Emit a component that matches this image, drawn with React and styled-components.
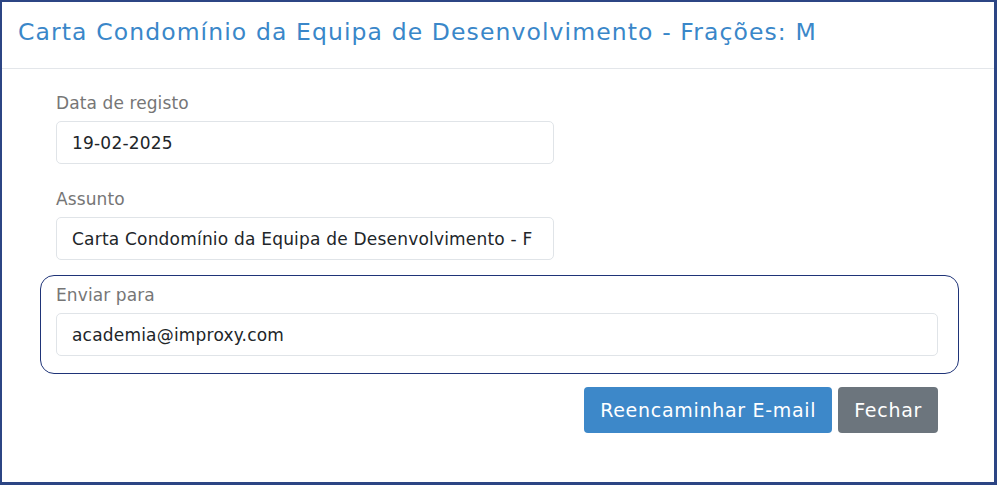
import React from 'react';
import styled, { createGlobalStyle } from 'styled-components';

const GlobalStyle = createGlobalStyle`
  html, body {
    margin: 0;
    padding: 0;
    background: #fff;
  }
  * {
    box-sizing: border-box;
  }
`;

const Frame = styled.div`
  width: 997px;
  height: 485px;
  border: 2px solid #2c4584;
  border-right-width: 3px;
  border-bottom-width: 3px;
  background: #fff;
  font-family: "DejaVu Sans", "Open Sans", sans-serif;
  overflow: hidden;
`;

const Header = styled.header`
  height: 67px;
  padding: 0 16px 6px;
  display: flex;
  align-items: center;
  border-bottom: 1px solid #e3e6ea;
`;

const Title = styled.h3`
  margin: 0;
  font-size: 23.5px;
  font-weight: 400;
  color: #3a87c9;
  letter-spacing: 1.1px;
  white-space: nowrap;
`;

const Body = styled.section`
  padding: 20px 56px 0 54px;
  display: flex;
  flex-direction: column;
`;

const Group = styled.div`
  position: relative;
  margin-bottom: 21px;
  ${({ highlighted }) => highlighted && `
    &::after {
      content: '';
      position: absolute;
      top: -6px;
      left: -16px;
      right: -21px;
      bottom: -18px;
      border: 1.5px solid #1f3478;
      border-radius: 14px;
      pointer-events: none;
    }
  `};
`;

const Label = styled.label`
  display: block;
  font-size: 17px;
  line-height: 28px;
  letter-spacing: 0.1px;
  color: #767676;
  margin-bottom: 4px;
`;

const Field = styled.input`
  display: block;
  width: 100%;
  height: 43px;
  max-width: ${({ narrow }) => (narrow ? '498px' : 'none')};
  border: 1px solid #e0e4e8;
  border-radius: 5px;
  padding: 0 21px 0 15px;
  font-family: inherit;
  font-size: 17px;
  letter-spacing: 0.2px;
  color: #212529;
  background: #fff;
  outline: none;
`;

const Footer = styled.div`
  display: flex;
  justify-content: flex-end;
  gap: 6px;
  margin-top: 10px;
`;

const Button = styled.button`
  height: 46px;
  padding: 0 16px;
  border: 0;
  border-radius: 4px;
  font-family: inherit;
  font-size: 19px;
  letter-spacing: 0.7px;
  color: #fff;
  background: ${({ variant }) => (variant === 'secondary' ? '#6c757d' : '#3d88c9')};
  cursor: pointer;
`;

const App = () => (
  <>
    <GlobalStyle />
    <Frame>
      <Header>
        <Title>Carta Condomínio da Equipa de Desenvolvimento - Frações: M</Title>
      </Header>
      <Body>
        <Group>
          <Label>Data de registo</Label>
          <Field narrow readOnly value="19-02-2025" />
        </Group>
        <Group>
          <Label>Assunto</Label>
          <Field narrow readOnly value="Carta Condomínio da Equipa de Desenvolvimento - Frações: M" />
        </Group>
        <Group highlighted>
          <Label>Enviar para</Label>
          <Field readOnly value="academia@improxy.com" />
        </Group>
        <Footer>
          <Button>Reencaminhar E-mail</Button>
          <Button variant="secondary">Fechar</Button>
        </Footer>
      </Body>
    </Frame>
  </>
);

export default App;
